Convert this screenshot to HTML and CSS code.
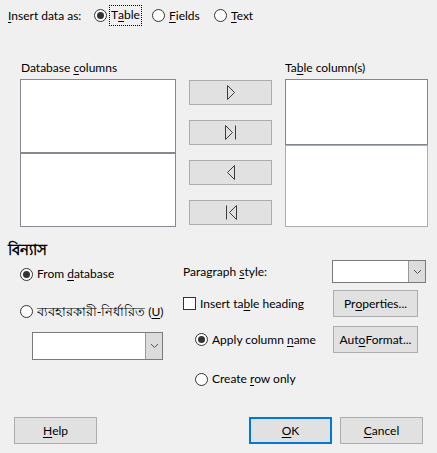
FILE: index.html
```html
<!DOCTYPE html>
<html>
<head>
<meta charset="utf-8">
<link rel="stylesheet" href="styles.css">
</head>
<body>
<div class="dialog">
  <div class="top">
    <span class="top-label"><u>I</u>nsert data as:</span>
    <label class="opt opt-table"><span class="radio on"></span><span class="focus">T<u>a</u>ble</span></label>
    <label class="opt opt-fields"><span class="radio"></span><span class="txt"><u>F</u>ields</span></label>
    <label class="opt"><span class="radio"></span><span class="txt"><u>T</u>ext</span></label>
  </div>

  <div class="columns">
    <div class="col-left">
      <div class="col-label lab-left">Database <u>c</u>olumns</div>
      <div class="list lbox-a"></div>
      <div class="list lbox-b"></div>
    </div>
    <div class="col-mid">
      <button class="btn arrow"><svg width="16" height="17" viewBox="0 0 16 17"><polygon points="4.5,1.5 11.5,8.5 4.5,15.5" /></svg></button>
      <button class="btn arrow"><svg width="16" height="17" viewBox="0 0 16 17"><polygon points="2.5,1.5 9.5,8.5 2.5,15.5" /><line x1="12.5" y1="1.5" x2="12.5" y2="15.5" /></svg></button>
      <button class="btn arrow"><svg width="16" height="17" viewBox="0 0 16 17"><polygon points="11.5,1.5 4.5,8.5 11.5,15.5" /></svg></button>
      <button class="btn arrow"><svg width="16" height="17" viewBox="0 0 16 17"><line x1="3.5" y1="1.5" x2="3.5" y2="15.5" /><polygon points="13.5,1.5 6.5,8.5 13.5,15.5" /></svg></button>
    </div>
    <div class="col-right">
      <div class="col-label">Ta<u>b</u>le column(s)</div>
      <div class="list rbox-a"></div>
      <div class="list rbox-b"></div>
    </div>
  </div>

  <div class="heading">বিন্যাস</div>

  <div class="lower">
    <div class="lower-left">
      <label class="opt row-from"><span class="radio on"></span><span class="txt">From <u>d</u>atabase</span></label>
      <label class="opt row-user"><span class="radio"></span><span class="txt"><span class="bn">ব্যবহারকারী-নির্ধারিত</span> (<u>U</u>)</span></label>
      <div class="combo combo-user"><span class="combo-field"></span><span class="combo-btn"><svg width="9" height="6" viewBox="0 0 9 6"><polyline points="1,1 4.5,4.5 8,1" /></svg></span></div>
    </div>
    <div class="lower-right">
      <div class="row row-style">
        <span class="row-label">Paragraph <u>s</u>tyle:</span>
        <div class="combo combo-style"><span class="combo-field"></span><span class="combo-btn"><svg width="9" height="6" viewBox="0 0 9 6"><polyline points="1,1 4.5,4.5 8,1" /></svg></span></div>
      </div>
      <div class="row row-heading">
        <label class="opt row-label"><span class="check"></span><span class="txt">Insert ta<u>b</u>le heading</span></label>
        <button class="btn side">Pr<u>o</u>perties...</button>
      </div>
      <div class="row row-apply">
        <label class="opt row-label indent"><span class="radio on"></span><span class="txt">Apply column <u>n</u>ame</span></label>
        <button class="btn side">Aut<u>o</u>Format...</button>
      </div>
      <label class="opt indent row-create"><span class="radio"></span><span class="txt">Create <u>r</u>ow only</span></label>
    </div>
  </div>

  <div class="bottom">
    <button class="btn action"><u>H</u>elp</button>
    <span class="spacer"></span>
    <button class="btn action default"><u>O</u>K</button>
    <button class="btn action"><u>C</u>ancel</button>
  </div>
</div>
</body>
</html>
```

FILE: styles.css
```css
* { box-sizing: border-box; }

html, body {
  margin: 0;
  padding: 0;
  background: #f0f0f0;
}

body {
  width: 437px;
  height: 453px;
  overflow: hidden;
  font-family: "Segoe UI", "Lato", "Noto Sans", "Noto Sans Bengali", "DejaVu Sans", sans-serif;
  font-size: 12px;
  color: #000;
}

u { text-underline-offset: 2px; }

.dialog {
  position: relative;
  width: 437px;
  height: 453px;
}

/* top row */
.top {
  display: flex;
  align-items: center;
  height: 19px;
  margin-top: 6px;
  padding-left: 8px;
}
.top-label { width: 86px; }

.opt {
  display: flex;
  align-items: center;
  line-height: 16px;
}
.opt .txt { margin-left: 4px; }
.opt-table { width: 58px; }
.opt-fields { width: 62px; }

.focus {
  margin-left: 3px;
  padding: 1px 1px 2px 1px;
  outline: 1px dotted #000;
  outline-offset: 0;
  height: 19px;
  display: flex;
  align-items: center;
}

.radio {
  position: relative;
  flex: none;
  width: 13px;
  height: 13px;
  border: 1px solid #333;
  border-radius: 50%;
  background: #fff;
}
.radio.on::after {
  content: "";
  position: absolute;
  left: 2px;
  top: 2px;
  width: 7px;
  height: 7px;
  border-radius: 50%;
  background: #333;
}

.check {
  flex: none;
  width: 13px;
  height: 13px;
  border: 1px solid #333;
  background: #fff;
}

/* columns */
.columns {
  display: flex;
  gap: 13px;
  padding-left: 20px;
  margin-top: 35px;
}
.col-label {
  height: 19px;
  line-height: 16px;
}
.lab-left { padding-left: 1px; }
.col-left { width: 156px; }
.col-right { width: 143px; }
.col-mid {
  width: 83px;
  padding-top: 20px;
  display: flex;
  flex-direction: column;
  gap: 15px;
}

.list {
  background: #fff;
  border: 1px solid #888890;
}
.lbox-a, .lbox-b { height: 74px; }
.rbox-a { height: 66px; border-color: #828790; }
.rbox-b { height: 82px; border-color: #adadad; }

.btn {
  font: inherit;
  color: #000;
  background: #e1e1e1;
  border: 1px solid #adadad;
  padding: 0;
  margin: 0;
  display: flex;
  align-items: center;
  justify-content: center;
}
.arrow { width: 83px; height: 25px; }
.arrow svg { display: block; }
.arrow polygon, .arrow line {
  fill: none;
  stroke: #3c3c3c;
  stroke-width: 1;
}

/* section heading */
.heading {
  margin-top: 13px;
  padding-left: 8px;
  font-family: "Noto Sans", sans-serif;
  font-size: 15px;
  font-weight: bold;
  height: 18px;
  line-height: 18px;
}

/* lower section */
.lower {
  display: flex;
}
.lower-left {
  width: 183px;
  padding-left: 20px;
}
.row-from { margin-top: 9px; height: 14px; }
.row-user { margin-top: 23px; height: 14px; }
.bn { font-family: "Noto Sans", sans-serif; font-size: 13px; }

.combo {
  display: flex;
  background: #fff;
  border: 1px solid #7a7a7a;
}
.combo-field { flex: 1; }
.combo-btn {
  width: 17px;
  background: #dcdcdc;
  border-left: 1px solid #999;
  display: flex;
  align-items: center;
  justify-content: center;
}
.combo-btn polyline {
  fill: none;
  stroke: #555;
  stroke-width: 1;
}
.combo-user {
  margin-top: 14px;
  margin-left: 12px;
  width: 131px;
  height: 28px;
}

.lower-right {
  flex: 1;
}
.row {
  display: flex;
  align-items: center;
}
.row-label { width: 150px; }
.row-style { margin-top: 2px; height: 23px; }
.combo-style { width: 94px; height: 23px; margin-left: -1px; }
.row-heading { margin-top: 7px; height: 27px; }
.row-apply { margin-top: 9px; height: 27px; }
.side { width: 85px; height: 27px; }
.indent { padding-left: 12px; }
.row-create { margin-top: 19px; height: 14px; }

/* bottom buttons */
.bottom {
  display: flex;
  position: absolute;
  left: 14px;
  top: 411px;
  width: 409px;
}
.spacer { flex: 1; }
.action { width: 83px; height: 27px; }
.action + .action { margin-left: 8px; }
.default { border: 2px solid #0078d7; }
```
